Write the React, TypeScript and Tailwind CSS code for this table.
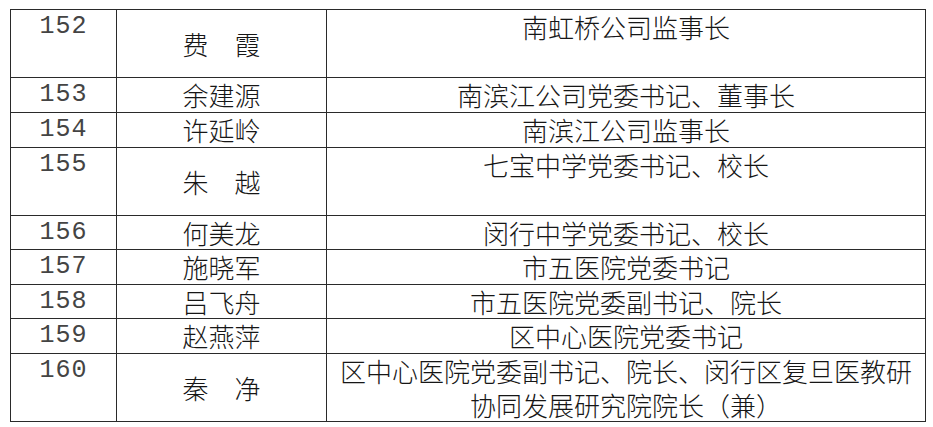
import React from "react";

type Row = { no: string; name: string; desc: string[]; tall: boolean };

const rows: Row[] = [
  { no: "152", name: "费\u3000霞", desc: ["南虹桥公司监事长"], tall: true },
  { no: "153", name: "余建源", desc: ["南滨江公司党委书记、董事长"], tall: false },
  { no: "154", name: "许延岭", desc: ["南滨江公司监事长"], tall: false },
  { no: "155", name: "朱\u3000越", desc: ["七宝中学党委书记、校长"], tall: true },
  { no: "156", name: "何美龙", desc: ["闵行中学党委书记、校长"], tall: false },
  { no: "157", name: "施晓军", desc: ["市五医院党委书记"], tall: false },
  { no: "158", name: "吕飞舟", desc: ["市五医院党委副书记、院长"], tall: false },
  { no: "159", name: "赵燕萍", desc: ["区中心医院党委书记"], tall: false },
  {
    no: "160",
    name: "秦\u3000净",
    desc: ["区中心医院党委副书记、院长、闵行区复旦医教研", "协同发展研究院院长（兼）"],
    tall: true,
  },
];

const cjk = { fontFamily: '"Noto Sans CJK SC", "Noto Sans", sans-serif' };
const mono = { fontFamily: '"Liberation Mono", "DejaVu Sans Mono", monospace' };

export default function App() {
  return (
    <div className="w-[933px] h-[427px] bg-white pt-[9px] pl-[10px] overflow-hidden">
      <div className="grid w-[916px] grid-cols-[105px_209px_598px] grid-rows-[67px_34px_34px_67px_33px_34px_33px_34px_67px] gap-px bg-[#2a2a2a] p-px text-[#161616]">
        {rows.map((r) => (
          <React.Fragment key={r.no}>
            <div className="bg-white flex justify-center items-start">
              <span className="text-[25px] leading-[34px] text-[#444444] tracking-[1px]" style={mono}>
                {r.no}
              </span>
            </div>
            <div className="bg-white flex justify-center items-center">
              <span className="text-[26px] leading-[34px] font-light whitespace-pre" style={cjk}>
                {r.name}
              </span>
            </div>
            <div className="bg-white flex flex-col items-center justify-start">
              {r.desc.map((d) => (
                <span key={d} className="text-[26px] leading-[34px] font-light whitespace-nowrap" style={cjk}>
                  {d}
                </span>
              ))}
            </div>
          </React.Fragment>
        ))}
      </div>
    </div>
  );
}
